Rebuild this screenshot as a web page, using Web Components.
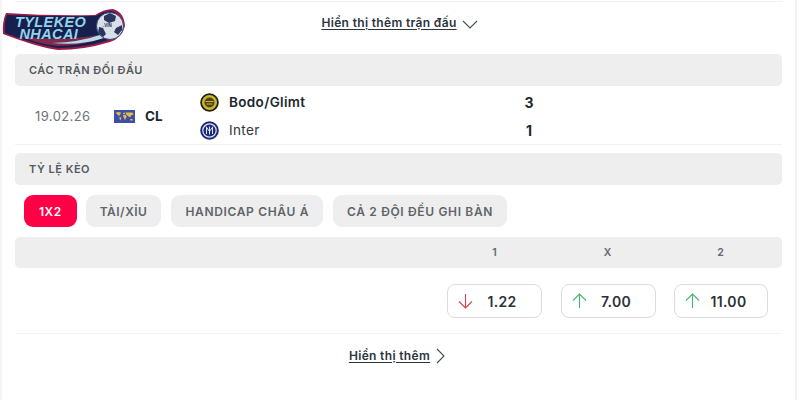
<!DOCTYPE html>
<html><head><meta charset="utf-8">
<style>
html,body{margin:0;padding:0;background:#fff}
body{width:800px;height:400px;overflow:hidden;font-family:Inter,"Noto Sans",sans-serif;color:#1f2933}
</style></head><body>
<template id="t-page"><style>
:host{display:flex;flex-direction:column;position:relative;box-sizing:border-box;width:797px;height:400px;padding:0 13px 0 13px;border-left:2px solid #f5f5f5;border-right:2px solid #f2f2f2}
.top{height:1px;background:#f0f0f0;margin-top:1px}
</style><div class="top"></div><slot></slot></template>

<template id="t-more"><style>
:host{display:flex;justify-content:center;align-items:center;gap:5px;font:600 12px/16px Inter,sans-serif;color:#2b3540}
span{text-decoration:underline;text-underline-offset:2px;letter-spacing:.34px}
</style><span><slot></slot></span><slot name="icon"></slot></template>

<template id="t-bar"><style>
:host{display:block;box-sizing:border-box;height:32px;background:#eeeeee;border-radius:5px;padding:0 14px;font:600 11px/32px Inter,sans-serif;color:#54595e;letter-spacing:.5px}
</style><slot></slot></template>

<template id="t-match"><style>
:host{display:grid;grid-template-columns:79px 86px 1fr;align-items:center;box-sizing:border-box;height:59px;border-bottom:1px solid #f2f2f2;padding:2px 0 0 20px}
.date{font:400 13px Inter,sans-serif;color:#6e7378;letter-spacing:.4px}
.comp{display:flex;align-items:center;gap:10px;font:700 13.5px Inter,sans-serif;color:#20272e}
.teams{display:grid;grid-template-rows:28px 28px}
</style><div class="date"><slot name="date"></slot></div><div class="comp"><slot name="flag"></slot><slot name="comp"></slot></div><div class="teams"><slot></slot></div></template>

<template id="t-team"><style>
:host{display:grid;grid-template-columns:29px 290px 20px;align-items:center;font:400 13.5px Inter,sans-serif;color:#30373e;letter-spacing:.35px}
:host([win]){font-weight:600;color:#20272e}
.s{font-weight:700;color:#20272e;text-align:center;letter-spacing:0;font-size:14px}
</style><slot name="logo"></slot><div><slot></slot></div><div class="s"><slot name="score"></slot></div></template>

<template id="t-tabs"><style>
:host{display:flex;gap:10px;padding:10px 0 10px 9px}
</style><slot></slot></template>

<template id="t-tab"><style>
:host{display:block;height:32px;box-sizing:border-box;padding:0 14px;border-radius:9px;background:#eeeeee;font:600 12px/33px Inter,sans-serif;color:#5f6469;letter-spacing:.66px}
:host([active]){background:#ff0046;color:#fff;padding:0 15px;letter-spacing:.5px;margin-right:-1px}
:host([short]){letter-spacing:.5px}
</style><slot></slot></template>

<template id="t-oddshead"><style>
:host{display:grid;grid-template-columns:423px 113px 113px 113px;height:31px;background:#eeeeee;border-radius:5px;font:600 10.5px/31px Inter,sans-serif;color:#62676c;text-align:center}
</style><div></div><slot></slot></template>

<template id="t-oddsrow"><style>
:host{display:flex;box-sizing:border-box;height:66px;padding:16px 0 0 432px;gap:19px;border-bottom:1px solid #f2f2f2}
</style><slot></slot></template>

<template id="t-odd"><style>
:host{display:flex;align-items:center;box-sizing:border-box;width:95px;height:34px;border:1px solid #dcdcdc;border-radius:8px;padding-left:10px;font:600 14px Inter,sans-serif;color:#2a3138;letter-spacing:.3px}
span{flex:1;text-align:center;padding-right:10px}
svg{display:block;fill:none;stroke-width:1.1}
:host([dir="down"]) svg{stroke:#d8404c}
:host([dir="up"]) svg{stroke:#45b474}
</style><svg width="15" height="18" viewBox="0 0 15 18"><path id="p"/></svg><span><slot></slot></span></template>

<template id="t-logo"><style>
:host{position:absolute;left:-2px;top:0;width:130px;height:54px;display:block}
svg{position:absolute;inset:0}
.t{position:absolute;left:15px;top:16px;font:italic 700 14.5px/12px "Liberation Sans",Arial,sans-serif;color:#92d4ea;white-space:pre;letter-spacing:.4px}
.v{position:absolute;left:103px;top:23px;font:700 4.5px/6px "Liberation Sans",sans-serif;color:#1d2a5b}
</style>
<svg width="130" height="54" viewBox="0 0 130 54">
<path d="M6 13 Q50 16 95 15 Q104 9 113 9 Q124 12 125 26 Q122 38 110 42 Q84 50 58 50 Q40 48 3 34 Q2 22 6 13Z" fill="#9d1b45"/>
<path d="M7 15 Q50 17 96 16 Q104 11 112 11 Q122 14 123 26 Q120 37 109 40 Q84 48 58 48 Q40 46 5 33 Q4 22 7 15Z" fill="#16204f"/>
<path d="M20 36 Q60 42 98 35 L103 38 Q80 46 58 46 Q38 44 20 36Z" fill="#7c2a4e"/>
<path d="M52 43 Q80 42 100 35 L104 38 Q80 46 52 43Z" fill="#b8dbe9"/>
<circle cx="110" cy="26" r="13.5" fill="#d9dfe8"/>
<path d="M104 16l6-3 6 3-1 5-6 2-5-3zM99 27l4 1 3 6-3 3-5-4zM116 28l6-3 0 5-4 5-4-3z" fill="#2b3560"/>
<circle cx="110" cy="26" r="13.5" fill="none" stroke="#3c4470" stroke-width="1"/>
</svg>
<div class="t">TYLEKEO
 NHACAI</div><div class="v">.VIN</div></template>

<page-shell>
<more-link style="height:42px;margin-left:2px">Hiển thị thêm trận đấu<svg slot="icon" width="16" height="10" viewBox="0 0 16 10" style="display:block;fill:none;stroke:#444c55;stroke-width:1.1;margin-top:2px"><path d="M1 2l7 7 7-7"/></svg></more-link>
<section-bar style="margin-top:10px">CÁC TRẬN ĐỐI ĐẦU</section-bar>
<match-row>
<span slot="date">19.02.26</span>
<svg slot="flag" width="21" height="13" viewBox="0 0 21 13" style="display:block"><rect width="21" height="13" fill="#3d50a6"/><path d="M1.500 3l2.500-1 3 .5-1 2.500-1.500 1-1-1.500zM5.500 7l2 .5-1 3-1-1.500zM9 3l2.500-.5-.5 1.500-1.500 .5zM9 5l3 0 .5 2-1.500 3-1.500-3zM12 2.500l6.500 0 1 2-2.500 1-1 2-2-1.500-2-1.500zM16 9l2.500 0 0 1.500-2 0z" fill="#e3bb4d"/></svg>
<span slot="comp">CL</span>
<team-row win><svg slot="logo" width="19" height="19" viewBox="0 0 19 19" style="display:block"><circle cx="9.500" cy="9.500" r="9.300" fill="#1f1f16"/><circle cx="9.500" cy="9.500" r="7.500" fill="#cfb826"/><circle cx="9.500" cy="9.500" r="5" fill="#4a4518"/><path d="M5.500 8h8v1h-8zM6.500 10.500h6v1h-6z" fill="#cfb826"/></svg>Bodo/Glimt<span slot="score">3</span></team-row>
<team-row><svg slot="logo" width="19" height="19" viewBox="0 0 19 19" style="display:block"><circle cx="9.500" cy="9.500" r="9.300" fill="#1c2a78"/><circle cx="9.500" cy="9.500" r="6.700" fill="none" stroke="#dfe3f0" stroke-width="1.200"/><path d="M6.500 6v7M9.500 5.500v8M12.500 6v7M6 5.500l3.500 5 3.500-5" fill="none" stroke="#dfe3f0" stroke-width="1"/></svg>Inter<span slot="score">1</span></team-row>
</match-row>
<section-bar style="margin-top:8px">TỶ LỆ KÈO</section-bar>
<tab-row><odds-tab active>1X2</odds-tab><odds-tab short>TÀI/XỈU</odds-tab><odds-tab>HANDICAP CHÂU Á</odds-tab><odds-tab>CẢ 2 ĐỘI ĐỀU GHI BÀN</odds-tab></tab-row>
<odds-head><div>1</div><div>X</div><div>2</div></odds-head>
<odds-row><odd-box dir="down">1.22</odd-box><odd-box dir="up">7.00</odd-box><odd-box dir="up" style="width:94px;margin-left:-1px">11.00</odd-box></odds-row>
<more-link style="height:44px;margin-right:3px">Hiển thị thêm<svg slot="icon" width="10" height="16" viewBox="0 0 10 16" style="display:block;fill:none;stroke:#444c55;stroke-width:1.1"><path d="M2 1l7 7-7 7"/></svg></more-link>
<site-logo></site-logo>
</page-shell>
<script>
const def=(n,t)=>customElements.define(n,class extends HTMLElement{constructor(){super();this.attachShadow({mode:'open'}).appendChild(document.getElementById(t).content.cloneNode(true))}});
def('page-shell','t-page');def('more-link','t-more');def('section-bar','t-bar');def('match-row','t-match');def('team-row','t-team');def('tab-row','t-tabs');def('odds-tab','t-tab');def('odds-head','t-oddshead');def('odds-row','t-oddsrow');def('site-logo','t-logo');
customElements.define('odd-box',class extends HTMLElement{constructor(){super();this.attachShadow({mode:'open'}).appendChild(document.getElementById('t-odd').content.cloneNode(true))}connectedCallback(){this.shadowRoot.getElementById('p').setAttribute('d',this.getAttribute('dir')==='down'?'M7.500 2v14M1 9.500l6.500 6.500 6.500-6.500':'M7.500 16V2M1 8.500L7.500 2 14 8.500')}});
</script>
</body></html>
